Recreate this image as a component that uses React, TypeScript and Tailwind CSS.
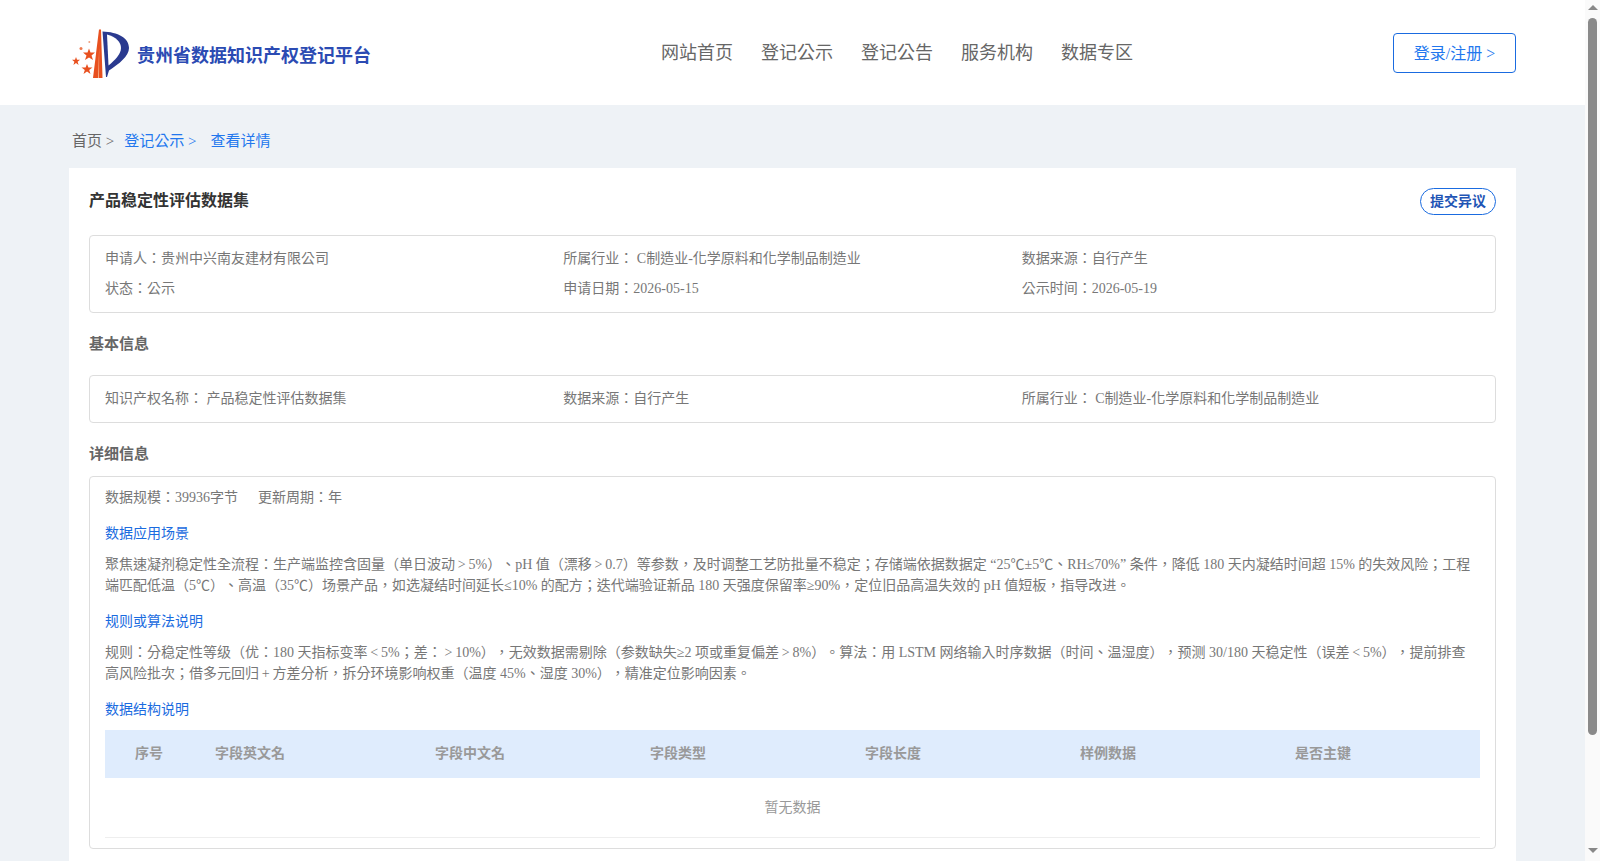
const cjk = "font-['Liberation_Serif','Noto_Sans_CJK_TC',serif]";

function Logo() {
  return (
    <svg width="70" height="60" viewBox="0 0 70 60" className="shrink-0">
      <path d="M34 6.5 L36 6.5 L37.5 55 L28 55 Z" fill="#e8501f" />
      <path d="M34.2 24 L33 55 L34 55 Z" fill="#f7b08a" />
      <path d="M37.5 8.5 C53 9 64 15 64 25 C64 33 54 41 44 47.5 L42 54 L41 54 Z" fill="#2a3a8f" />
      <path d="M42 11.5 C51 14 56 19 56 25 C56 31 50 37 43.5 42.5 Z" fill="#ffffff" />
      <polygon points="24,25.5 25.5,29.5 30,29.5 26.5,32.5 28,37 24,34.5 20,37 21.5,32.5 18,29.5 22.5,29.5" fill="#e8501f" />
      <polygon points="11,34 12,36.8 15,36.8 12.6,38.7 13.6,42 11,40 8.4,42 9.4,38.7 7,36.8 10,36.8" fill="#e8501f" />
      <polygon points="22,41 23.4,44.5 27.5,44.5 24.2,47 25.5,51 22,48.6 18.5,51 19.8,47 16.5,44.5 20.6,44.5" fill="#e8501f" />
      <circle cx="16" cy="25.5" r="1.5" fill="#ee7a50" />
      <circle cx="24.3" cy="19" r="1" fill="#f0a080" />
    </svg>
  );
}

const headers: [string, string][] = [
  ["序号", "w-[110px] pl-[30px]"],
  ["字段英文名", "w-[220px]"],
  ["字段中文名", "w-[215px]"],
  ["字段类型", "w-[215px]"],
  ["字段长度", "w-[215px]"],
  ["样例数据", "w-[215px]"],
  ["是否主键", "flex-1"],
];

export default function App() {
  return (
    <div className={`flex h-[861px] overflow-hidden bg-[#eef2f6] text-sm text-[#777] [text-spacing-trim:space-all] ${cjk}`}>
      <div className="flex-1 min-w-0">
        <header className="flex h-[105px] items-center bg-white pl-[65px] pr-[69px]">
          <div className="flex w-[596px] items-center gap-[2px]">
            <Logo />
            <span className="mt-[6px] text-lg font-bold text-[#2b4bb3]">贵州省数据知识产权登记平台</span>
          </div>
          <nav className="flex flex-1 gap-[28px] text-lg text-[#666]">
            <span>网站首页</span>
            <span>登记公示</span>
            <span>登记公告</span>
            <span>服务机构</span>
            <span>数据专区</span>
          </nav>
          <button className="h-10 w-[123px] rounded border border-[#1a6be0] pt-[2px] text-base text-[#2277ee]">登录/注册 &gt;</button>
        </header>
        <div className="flex h-[63px] items-center gap-[10px] px-[72px] pt-[10px] text-[15px] text-[#2277ee]">
          <span className="text-[#666]">首页 &gt;</span>
          <span>登记公示 &gt;</span>
          <span className="ml-[4px]">查看详情</span>
        </div>
        <main className="mx-[69px] h-[700px] bg-white px-5">
          <div className="flex h-[67px] items-center justify-between pb-[2px]">
            <h1 className="text-base font-bold text-[#333]">产品稳定性评估数据集</h1>
            <button className="mt-[2px] h-[27px] w-[76px] rounded-[14px] border border-[#1a6be0] font-bold text-[#1f55b5]">提交异议</button>
          </div>
          <div className="grid h-[78px] grid-cols-3 content-center gap-y-[10px] rounded border border-[#ddd] px-[15px]">
            <div>申请人：贵州中兴南友建材有限公司</div>
            <div>所属行业： C制造业-化学原料和化学制品制造业</div>
            <div>数据来源：自行产生</div>
            <div>状态：公示</div>
            <div>申请日期：2026-05-15</div>
            <div>公示时间：2026-05-19</div>
          </div>
          <h2 className="flex h-[62px] items-center pt-[2px] text-[15px] font-bold text-[#666]">基本信息</h2>
          <div className="grid h-12 grid-cols-3 items-center rounded border border-[#ddd] px-[15px]">
            <div>知识产权名称： 产品稳定性评估数据集</div>
            <div>数据来源：自行产生</div>
            <div>所属行业： C制造业-化学原料和化学制品制造业</div>
          </div>
          <h2 className="flex h-[53px] items-center pt-[11px] text-[15px] font-bold text-[#666]">详细信息</h2>
          <div className="h-[373px] rounded border border-[#ddd] px-[15px] pt-[11px]">
            <div className="flex gap-5 leading-[20px]">
              <span>数据规模：39936字节</span>
              <span>更新周期：年</span>
            </div>
            <h3 className="mt-4 leading-[20px] text-[#1a6be0]">数据应用场景</h3>
            <p className="mt-[10px] leading-[21px]">聚焦速凝剂稳定性全流程：生产端监控含固量（单日波动&thinsp;&gt;&thinsp;5%）、pH 值（漂移&thinsp;&gt;&thinsp;0.7）等参数，及时调整工艺防批量不稳定；存储端依据数据定 “25℃±5℃、RH≤70%” 条件，降低 180 天内凝结时间超 15% 的失效风险；工程端匹配低温（5℃）、高温（35℃）场景产品，如选凝结时间延长≤10% 的配方；迭代端验证新品 180 天强度保留率≥90%，定位旧品高温失效的 pH 值短板，指导改进。</p>
            <h3 className="mt-4 leading-[20px] text-[#1a6be0]">规则或算法说明</h3>
            <p className="mt-[10px] pr-[4px] leading-[21px]">规则：分稳定性等级（优：180 天指标变率&thinsp;&lt;&thinsp;5%；差：&thinsp;&gt;&thinsp;10%），无效数据需剔除（参数缺失≥2 项或重复偏差&thinsp;&gt;&thinsp;8%）。算法：用 LSTM 网络输入时序数据（时间、温湿度），预测 30/180 天稳定性（误差&thinsp;&lt;&thinsp;5%），提前排查高风险批次；借多元回归&thinsp;+&thinsp;方差分析，拆分环境影响权重（温度 45%、湿度 30%），精准定位影响因素。</p>
            <h3 className="mt-4 leading-[20px] text-[#1a6be0]">数据结构说明</h3>
            <div className="mt-[10px] flex h-12 items-center bg-[#dfecfd] font-bold text-[#999]">
              {headers.map(([t, w]) => (
                <div key={t} className={w}>{t}</div>
              ))}
            </div>
            <div className="flex h-[60px] items-center justify-center border-b border-[#eee] text-[#999]">暂无数据</div>
          </div>
        </main>
      </div>
      <aside className="flex w-[15px] shrink-0 flex-col items-center bg-[#fafafa]">
        <div className="mt-[5px] h-0 w-0 border-x-[5px] border-b-[5px] border-x-transparent border-b-[#888]" />
        <div className="mt-[8px] h-[717px] w-[9px] rounded-full bg-[#8a8a8a]" />
        <div className="mt-[113px] h-0 w-0 border-x-[5px] border-t-[5px] border-x-transparent border-t-[#888]" />
      </aside>
    </div>
  );
}
